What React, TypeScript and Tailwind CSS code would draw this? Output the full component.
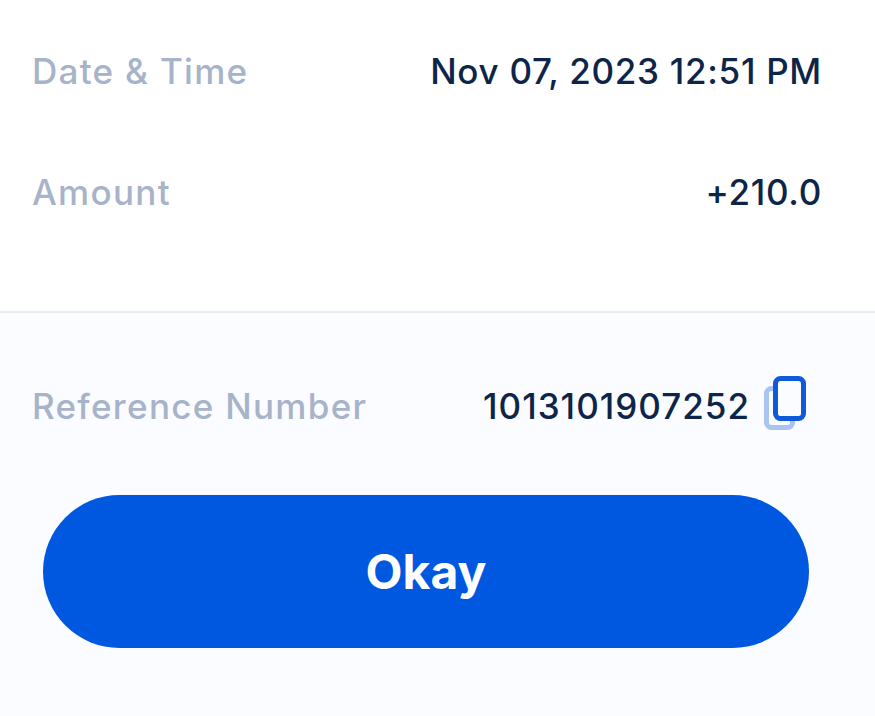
const FONT = "font-['Inter',sans-serif]"
const LABEL = "text-[35px] leading-[44px] font-medium tracking-[1.3px] text-[#a7b3c9]"

function Row({ label, children, className }: { label: string; children: React.ReactNode; className: string }) {
  return (
    <div className={`flex items-center justify-between pl-[32px] pr-[53px] ${className}`}>
      <span className={LABEL}>{label}</span>
      {children}
    </div>
  )
}

function CopyIcon() {
  return (
    <svg className="mb-[4px]" width="43" height="55" viewBox="0 0 43 55" fill="none" aria-hidden>
      <rect x="2.500" y="12.500" width="26" height="39" rx="5" stroke="#a9c4f2" strokeWidth="5" />
      <rect x="11.500" y="2.500" width="28" height="40" rx="5" fill="#fafcff" stroke="#0f5ad9" strokeWidth="5" />
    </svg>
  )
}

export default function App() {
  return (
    <div className={`h-[716px] w-[875px] overflow-hidden bg-white ${FONT}`}>
      <section className="h-[313px] border-b-2 border-[#e9eded] pt-[49px]">
        <Row label="Date & Time" className="">
          <span className="text-[35px] leading-[44px] font-medium tracking-[0.7px] text-[#0d2548]">
            Nov 07, 2023 12:51 PM
          </span>
        </Row>
        <Row label="Amount" className="mt-[77px]">
          <span className="text-[35px] leading-[44px] font-medium tracking-[0.7px] text-[#0d2548]">+210.0</span>
        </Row>
      </section>

      <section className="h-[403px] bg-[#fafcff] pt-[63px]">
        <div className="flex items-center justify-between pl-[32px] pr-[68px]">
          <span className={LABEL}>Reference Number</span>
          <div className="flex items-center gap-[14px]">
            <span className="text-[35px] leading-[44px] font-medium tracking-[1px] text-[#0d2548]">1013101907252</span>
            <CopyIcon />
          </div>
        </div>
        <div className="pl-[43px]">
          <button className="mt-[60px] flex h-[153px] w-[766px] items-center justify-center rounded-full bg-[#0058e0] text-[48px] font-bold text-white">
            Okay
          </button>
        </div>
      </section>
    </div>
  )
}
